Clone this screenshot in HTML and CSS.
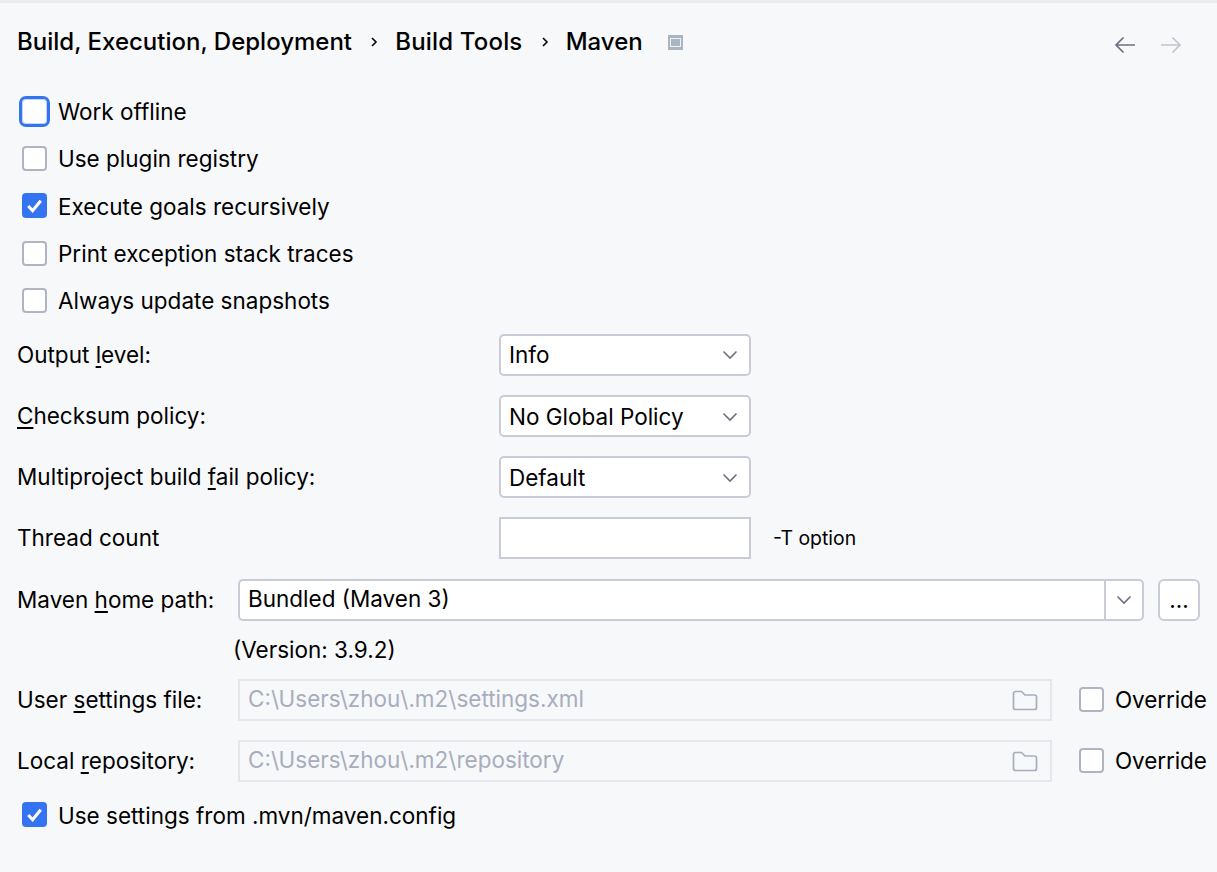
FILE: index.html
```html
<!DOCTYPE html>
<html lang="en">
<head>
<meta charset="utf-8">
<title>Maven settings</title>
<link rel="stylesheet" href="styles.css">
</head>
<body>
<div class="panel">
  <header class="crumbs">
    <span class="crumb">Build, Execution, Deployment</span>
    <svg class="sep" viewBox="0 0 8 12" width="8" height="12"><path d="M2 2l4 4-4 4" fill="none" stroke="#000" stroke-width="1.6"/></svg>
    <span class="crumb wide">Build Tools</span>
    <svg class="sep" viewBox="0 0 8 12" width="8" height="12"><path d="M2 2l4 4-4 4" fill="none" stroke="#000" stroke-width="1.6"/></svg>
    <span class="crumb">Maven</span>
    <svg class="scope" viewBox="0 0 15 15" width="15" height="15"><rect width="15" height="15" fill="#a9b5c1"/><rect x="2.500" y="3.500" width="10" height="8" fill="#a9b5c1" stroke="#eef0f3"/></svg>
    <span class="nav">
      <svg viewBox="0 0 22 18" width="22" height="18"><path d="M21 9H2M9.500 1.500L2 9l7.500 7.500" fill="none" stroke="#6c707e" stroke-width="1.700"/></svg>
      <svg viewBox="0 0 22 18" width="22" height="18"><path d="M1 9h19M12.500 1.500L20 9l-7.500 7.500" fill="none" stroke="#c2c4cb" stroke-width="1.700"/></svg>
    </span>
  </header>

  <div class="checks">
    <label class="check"><span class="box focus"></span>Work offline</label>
    <label class="check"><span class="box"></span>Use plugin registry</label>
    <label class="check"><span class="box on"><svg viewBox="0 0 24 24" width="25" height="25"><path d="M6 12.500l4.200 4.500L18 7.500" fill="none" stroke="#fff" stroke-width="3"/></svg></span>Execute goals recursively</label>
    <label class="check"><span class="box"></span>Print exception stack traces</label>
    <label class="check"><span class="box"></span>Always update snapshots</label>
  </div>

  <div class="select-rows">
    <div class="row"><span class="label">Output <u>l</u>evel:</span><div class="select"><span>Info</span><svg class="chev" viewBox="0 0 16 10" width="16" height="10"><path d="M1.500 1.500L8 8l6.500-6.500" fill="none" stroke="#6c707e" stroke-width="1.600"/></svg></div></div>
    <div class="row"><span class="label"><u>C</u>hecksum policy:</span><div class="select"><span>No Global Policy</span><svg class="chev" viewBox="0 0 16 10" width="16" height="10"><path d="M1.500 1.500L8 8l6.500-6.500" fill="none" stroke="#6c707e" stroke-width="1.600"/></svg></div></div>
    <div class="row"><span class="label">Multiproject build <u>f</u>ail policy:</span><div class="select"><span>Default</span><svg class="chev" viewBox="0 0 16 10" width="16" height="10"><path d="M1.500 1.500L8 8l6.500-6.500" fill="none" stroke="#6c707e" stroke-width="1.600"/></svg></div></div>
    <div class="row"><span class="label">Thread count</span><div class="input"></div><span class="hint">-T option</span></div>
  </div>

  <div class="home">
    <span class="path-label">Maven <u>h</u>ome path:</span>
    <div class="combo"><span class="combo-text">Bundled (Maven 3)</span><span class="combo-arrow"><svg viewBox="0 0 16 10" width="16" height="10"><path d="M1.500 1.500L8 8l6.500-6.500" fill="none" stroke="#6c707e" stroke-width="1.600"/></svg></span></div>
    <button class="dots" type="button">...</button>
  </div>
  <div class="version">(Version: 3.9.2)</div>

  <div class="path-row first">
    <span class="path-label">User <u>s</u>ettings file:</span>
    <div class="disabled"><span class="disabled-text">C:\Users\zhou\.m2\settings.xml</span><svg viewBox="0 0 26 22" width="26" height="22"><path d="M1.500 4.500a2 2 0 0 1 2-2h6l3.500 3.500h9.500a2 2 0 0 1 2 2v10.500a2 2 0 0 1-2 2h-19a2 2 0 0 1-2-2z" fill="none" stroke="#a8adbd" stroke-width="1.700"/></svg></div>
    <label class="check override"><span class="box"></span>Override</label>
  </div>
  <div class="path-row">
    <span class="path-label">Local <u>r</u>epository:</span>
    <div class="disabled"><span class="disabled-text">C:\Users\zhou\.m2\repository</span><svg viewBox="0 0 26 22" width="26" height="22"><path d="M1.500 4.500a2 2 0 0 1 2-2h6l3.500 3.500h9.500a2 2 0 0 1 2 2v10.500a2 2 0 0 1-2 2h-19a2 2 0 0 1-2-2z" fill="none" stroke="#a8adbd" stroke-width="1.700"/></svg></div>
    <label class="check override"><span class="box"></span>Override</label>
  </div>
  <label class="check last"><span class="box on"><svg viewBox="0 0 24 24" width="25" height="25"><path d="M6 12.500l4.200 4.500L18 7.500" fill="none" stroke="#fff" stroke-width="3"/></svg></span>Use settings from .mvn/maven.config</label>
</div>
</body>
</html>
```
FILE: styles.css
```css
* { box-sizing: border-box; }
html, body { margin: 0; height: 100%; }
body {
  background: #f7f8fa;
  color: #000;
  font-family: Inter, "Liberation Sans", sans-serif;
  font-size: 22.500px;
  overflow: hidden;
}
.panel {
  height: 872px;
  border-top: 3px solid #ebecf0;
  padding: 0 17px;
}
u { text-underline-offset: 3px; text-decoration-thickness: 2px; }

.crumbs { display: flex; align-items: center; height: 77px; }
.crumb { font-weight: 500; font-size: 24px; line-height: 28px; }
.crumb.wide { letter-spacing: 0.180px; }
.sep { margin: 0 17px 0 18.200px; flex: none; }
.scope { margin: 2px 0 0 25.500px; }
.nav { margin: 6px 18px 0 auto; display: flex; gap: 24px; }

.checks { display: flex; flex-direction: column; margin-top: 8px; }
.check { display: flex; align-items: center; height: 47.300px; }
.checks .check:nth-child(3) { padding-top: 1px; }
.box {
  width: 25px; height: 25px;
  margin: 0 11px 0 5px;
  flex: none;
  background: #fff;
  border: 2px solid #b0b4c2;
  border-radius: 4px;
}
.box.focus { outline: 3px solid #3574f0; outline-offset: 0; border: 1px solid #c5d5f7; }
.box.on { background: #3574f0; border: 0; margin-top: -2px; }
.box.on svg { display: block; }

.select-rows { display: flex; flex-direction: column; gap: 19px; margin-top: 9.500px; }
.row { display: flex; align-items: center; height: 42px; }
.label { width: 482px; flex: none; }
.select, .input, .combo, .dots, .disabled { height: 42px; border: 2px solid #c9ccd6; background: #fff; flex: none; }
.select {
  width: 252px; border-radius: 5px;
  display: flex; align-items: center; justify-content: space-between;
  padding: 0 11px 0 8px;
}
.row:nth-child(n+2) .select { padding-top: 2px; }
.input { width: 252px; }
.hint { margin-left: 22px; font-size: 19.400px; }

.home { display: flex; align-items: center; margin-top: 20px; }
.path-label { width: 221px; flex: none; }
.combo { display: flex; align-items: center; width: 906px; border-radius: 5px; }
.combo-text { flex: 1; padding: 0 0 2px 8px; }
.combo-arrow { width: 38px; height: 100%; border-left: 2px solid #c9ccd6; display: flex; align-items: center; justify-content: center; }
.dots { width: 42px; margin-left: 14px; border-radius: 6px; padding: 0; font: inherit; color: #000; }
.version { height: 58px; display: flex; align-items: center; padding-left: 216px; }

.path-row { display: flex; align-items: center; height: 42px; margin-top: 19px; }
.path-row.first { margin-top: 0; }
.disabled {
  width: 814px; background: #f7f8fa; border-color: #e6e7ec; color: #a8adbd;
  display: flex; align-items: center; justify-content: space-between;
  padding: 0 12px 0 8px;
}
.disabled-text { padding-bottom: 2px; }
.check.override { margin-left: 22px; height: 42px; flex: none; letter-spacing: -0.100px; }
.check.last { height: 50px; margin-top: 8.500px; }
```
